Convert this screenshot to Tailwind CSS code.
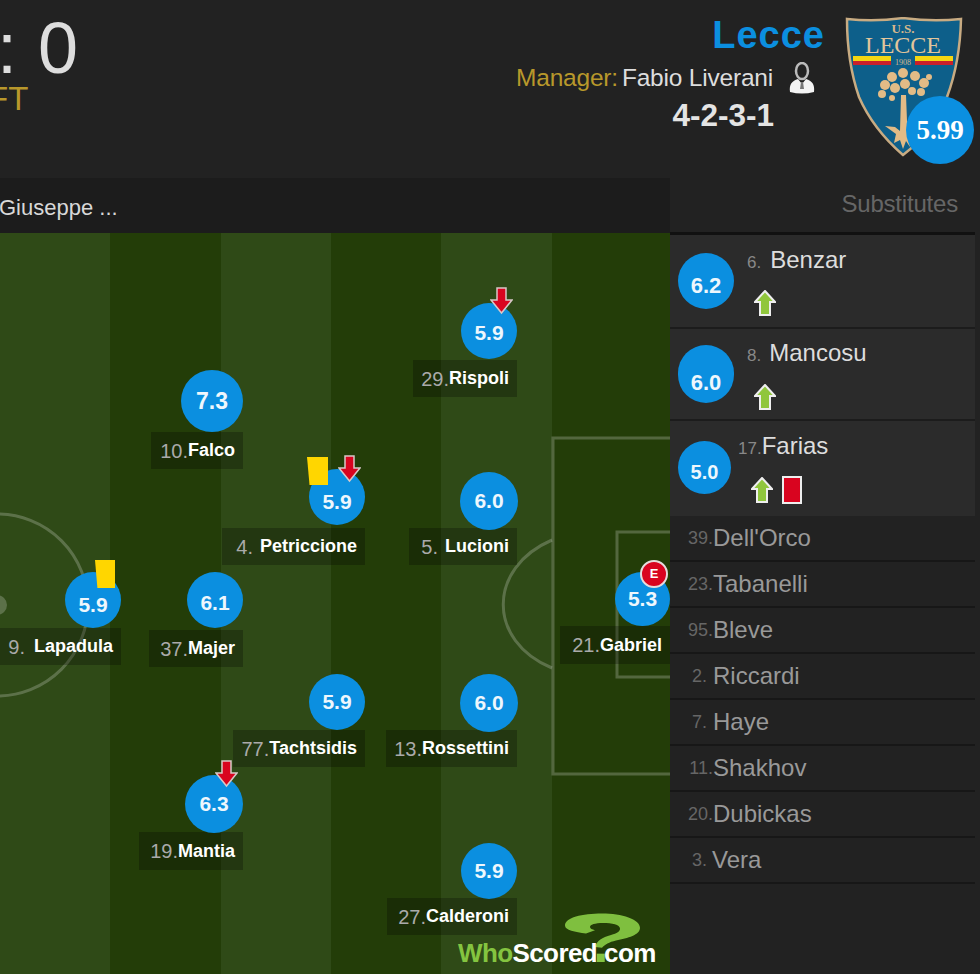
<!DOCTYPE html>
<html lang="en">
<head>
<meta charset="UTF-8">
<title>Lecce ratings</title>
<script src="https://cdn.jsdelivr.net/npm/@tailwindcss/browser@4"></script>
</head>
<body class="bg-[#222222] font-['Liberation_Sans',Arial,sans-serif] text-[#e0e0e0]">
<div class="w-[980px] h-[974px] overflow-hidden flex flex-col">

  <!-- match header -->
  <header class="h-[178px] shrink-0 flex justify-between bg-[#222222]">
    <div class="w-[100px] overflow-hidden">
      <div class="flex items-baseline h-[78px] text-[#dddddd] text-[72px] leading-[96px] ml-[-3px]">
        <span class="w-[41px]">:</span><span>0</span>
      </div>
      <div class="text-[#b8982b] text-[33px] leading-[40px] ml-[-12px] mt-[1px]">FT</div>
    </div>
    <div class="flex">
      <div class="flex flex-col items-end pt-[12px]">
        <div class="text-[#0b8fe0] text-[38px] leading-[46px] font-bold tracking-[1px] mr-[-55px]">Lecce</div>
        <div class="flex items-center mt-[4px] text-[24.500px] leading-[30px] tracking-[-0.2px]">
          <span class="text-[#b8982b]">Manager:</span>
          <span class="ml-[4px] text-[#dddddd]">Fabio Liverani</span>
          <svg class="ml-[16px] mr-[-45px]" width="26" height="32" viewBox="0 0 26 32">
            <ellipse cx="13" cy="9" rx="6" ry="8" fill="none" stroke="#bbbbbb" stroke-width="2.500"/>
            <path d="M1 30c-1-8 2-11 8-13l4 5 4-5c6 2 9 5 8 13-8 2-16 2-24 0z" fill="#f4f4f4"/>
            <path d="M12 20h2l1 7h-4z" fill="#777777"/>
          </svg>
        </div>
        <div class="text-[31.500px] leading-[42px] font-bold text-[#e4e4e4] mr-[-4px]">4-2-3-1</div>
      </div>
      <div class="relative w-[134px] ml-[71px] mr-[5px]">
        <svg class="absolute left-[4px] top-[17px]" width="118" height="140" viewBox="0 0 118 140">
          <path d="M2 2Q30 5 58 1Q87 5 116 2Q115 45 102 80Q88 115 58 138Q28 112 14 80Q2 45 2 2z" fill="#0d5f8a" stroke="#c8ab82" stroke-width="2.500"/>
          <text x="58" y="16" text-anchor="middle" font-family="Liberation Serif" font-size="13" font-weight="bold" fill="#d8b98c">U.S.</text>
          <text x="58" y="36" text-anchor="middle" font-family="Liberation Serif" font-size="24" fill="#e2c59b">LECCE</text>
          <rect x="8" y="39" width="38" height="5" fill="#f4d612"/>
          <rect x="8" y="44" width="38" height="4" fill="#c8202c"/>
          <rect x="70" y="39" width="38" height="5" fill="#f4d612"/>
          <rect x="70" y="44" width="38" height="4" fill="#c8202c"/>
          <text x="58" y="48" text-anchor="middle" font-family="Liberation Serif" font-size="8" fill="#d8b98c">1908</text>
          <g fill="#e2bb86">
            <circle cx="40" cy="68" r="5"/><circle cx="37" cy="77" r="4"/><circle cx="47" cy="60" r="5"/><circle cx="58" cy="56" r="5"/>
            <circle cx="70" cy="59" r="5"/><circle cx="79" cy="66" r="5"/><circle cx="84" cy="60" r="3"/><circle cx="76" cy="75" r="4"/>
            <circle cx="50" cy="71" r="5"/><circle cx="60" cy="67" r="5"/><circle cx="67" cy="74" r="4"/><circle cx="47" cy="81" r="3"/>
            <path d="M56 78h5l1 26 5 8-4 6 2 12-4-6-3 8-3-9-6 3 2-9-11-8 10 1 5 4z"/>
          </g>
        </svg>
        <div class="absolute left-[65px] top-[96px] w-[68px] h-[68px] rounded-full bg-[#0b8fe0] text-white font-bold font-['Liberation_Serif'] text-[27px] flex items-center justify-center">5.99</div>
      </div>
    </div>
  </header>

  <div class="flex flex-1 min-h-0">
    <!-- pitch column -->
    <main class="w-[670px] shrink-0 flex flex-col">
      <div class="h-[55px] shrink-0 bg-[#1c1c1c] text-[#d8d8d8] text-[22px] leading-[60px] ml-[-1px]">Giuseppe ...</div>
      <div class="relative flex-1 overflow-hidden">
        <div class="absolute inset-0 flex">
          <div class="w-[110px] bg-[#2f4a17]"></div>
          <div class="w-[111px] bg-[#233d08]"></div>
          <div class="w-[110px] bg-[#2f4a17]"></div>
          <div class="w-[110px] bg-[#233d08]"></div>
          <div class="w-[111px] bg-[#2f4a17]"></div>
          <div class="w-[118px] bg-[#233d08]"></div>
        </div>
        <svg class="absolute inset-0" width="670" height="741" viewBox="0 0 670 741" fill="none" stroke="#ffffff" stroke-opacity="0.22" stroke-width="3">
          <circle cx="-3" cy="372" r="91"/>
          <circle cx="-3" cy="372" r="10" fill="#ffffff" fill-opacity="0.22" stroke="none"/>
          <path d="M672 205H553V541H672"/>
          <path d="M672 299H617V444H672"/>
          <path d="M552 307C487 335 487 408 552 435"/>
        </svg>

        <!-- players -->
        <div class="absolute left-[413px] top-[127px] w-[104px] h-[37px] bg-black/25 flex items-center justify-end pr-[8px] text-[18px] font-bold text-white"><span class="font-normal text-[20px] text-[#aaaaaa]">29.</span>Rispoli</div>
        <div class="absolute left-[461px] top-[70px] w-[56px] h-[56px] rounded-full bg-[#0b8fe0] flex items-center justify-center text-[21px] font-bold text-[#eef7fd] pt-[3px]">5.9</div>
        <svg class="absolute left-[490px] top-[54px]" width="23" height="28" viewBox="0 0 23 28"><path d="M7 1h9v12h6L11.500 26 1 13h6z" fill="#d9041f" stroke="#d8c8c8" stroke-width="1.500"/></svg>

        <div class="absolute left-[151px] top-[199px] w-[92px] h-[37px] bg-black/25 flex items-center justify-end pr-[8px] text-[18px] font-bold text-white"><span class="font-normal text-[20px] text-[#aaaaaa]">10.</span>Falco</div>
        <div class="absolute left-[181px] top-[137px] w-[62px] h-[62px] rounded-full bg-[#0b8fe0] flex items-center justify-center text-[23px] font-bold text-[#eef7fd]">7.3</div>

        <div class="absolute left-[222px] top-[295px] w-[143px] h-[37px] bg-black/25 flex items-center justify-end pr-[8px] text-[18px] font-bold text-white"><span class="font-normal text-[20px] text-[#aaaaaa] mr-[7px]">4.</span>Petriccione</div>
        <div class="absolute left-[309px] top-[236px] w-[56px] h-[56px] rounded-full bg-[#0b8fe0] flex items-center justify-center text-[21px] font-bold text-[#eef7fd] pt-[10px]">5.9</div>
        <div class="absolute left-[307px] top-[224px] w-[21px] h-[28px] bg-[#ffd600] [clip-path:polygon(0_0,100%_0,100%_100%,12%_100%)]"></div>
        <svg class="absolute left-[338px] top-[222px]" width="23" height="28" viewBox="0 0 23 28"><path d="M7 1h9v12h6L11.500 26 1 13h6z" fill="#d9041f" stroke="#d8c8c8" stroke-width="1.500"/></svg>

        <div class="absolute left-[409px] top-[295px] w-[108px] h-[37px] bg-black/25 flex items-center justify-end pr-[8px] text-[18px] font-bold text-white"><span class="font-normal text-[20px] text-[#aaaaaa] mr-[7px]">5.</span>Lucioni</div>
        <div class="absolute left-[460px] top-[239px] w-[58px] h-[58px] rounded-full bg-[#0b8fe0] flex items-center justify-center text-[21px] font-bold text-[#eef7fd]">6.0</div>

        <div class="absolute left-0 top-[395px] w-[121px] h-[37px] bg-black/25 flex items-center justify-end pr-[8px] text-[18px] font-bold text-white"><span class="font-normal text-[20px] text-[#aaaaaa] mr-[9px]">9.</span>Lapadula</div>
        <div class="absolute left-[65px] top-[339px] w-[56px] h-[56px] rounded-full bg-[#0b8fe0] flex items-center justify-center text-[21px] font-bold text-[#eef7fd] pt-[9px]">5.9</div>
        <div class="absolute left-[95px] top-[327px] w-[20px] h-[28px] bg-[#ffd600] [clip-path:polygon(0_0,100%_0,100%_100%,12%_100%)]"></div>

        <div class="absolute left-[149px] top-[397px] w-[94px] h-[37px] bg-black/25 flex items-center justify-end pr-[8px] text-[18px] font-bold text-white"><span class="font-normal text-[20px] text-[#aaaaaa]">37.</span>Majer</div>
        <div class="absolute left-[187px] top-[339px] w-[56px] h-[56px] rounded-full bg-[#0b8fe0] flex items-center justify-center text-[21px] font-bold text-[#eef7fd] pt-[5px]">6.1</div>

        <div class="absolute left-[560px] top-[393px] w-[110px] h-[38px] bg-black/25 flex items-center justify-end pr-[8px] text-[18px] font-bold text-white"><span class="font-normal text-[20px] text-[#aaaaaa]">21.</span>Gabriel</div>
        <div class="absolute left-[615px] top-[339px] w-[55px] h-[54px] rounded-full bg-[#0b8fe0] flex items-center justify-center text-[21px] font-bold text-[#eef7fd]">5.3</div>
        <div class="absolute left-[640px] top-[327px] w-[28px] h-[28px] rounded-full bg-[#d9041f] border-2 border-[#e6dcdc] flex items-center justify-center text-[13px] font-bold text-white">E</div>

        <div class="absolute left-[233px] top-[497px] w-[132px] h-[37px] bg-black/25 flex items-center justify-end pr-[8px] text-[18px] font-bold text-white"><span class="font-normal text-[20px] text-[#aaaaaa]">77.</span>Tachtsidis</div>
        <div class="absolute left-[309px] top-[441px] w-[56px] h-[56px] rounded-full bg-[#0b8fe0] flex items-center justify-center text-[21px] font-bold text-[#eef7fd]">5.9</div>

        <div class="absolute left-[386px] top-[497px] w-[131px] h-[37px] bg-black/25 flex items-center justify-end pr-[8px] text-[18px] font-bold text-white"><span class="font-normal text-[20px] text-[#aaaaaa]">13.</span>Rossettini</div>
        <div class="absolute left-[460px] top-[441px] w-[58px] h-[58px] rounded-full bg-[#0b8fe0] flex items-center justify-center text-[21px] font-bold text-[#eef7fd]">6.0</div>

        <div class="absolute left-[139px] top-[599px] w-[104px] h-[38px] bg-black/25 flex items-center justify-end pr-[8px] text-[18px] font-bold text-white"><span class="font-normal text-[20px] text-[#aaaaaa]">19.</span>Mantia</div>
        <div class="absolute left-[185px] top-[542px] w-[58px] h-[58px] rounded-full bg-[#0b8fe0] flex items-center justify-center text-[21px] font-bold text-[#eef7fd]">6.3</div>
        <svg class="absolute left-[215px] top-[527px]" width="23" height="28" viewBox="0 0 23 28"><path d="M7 1h9v12h6L11.500 26 1 13h6z" fill="#d9041f" stroke="#d8c8c8" stroke-width="1.500"/></svg>

        <div class="absolute left-[387px] top-[665px] w-[130px] h-[37px] bg-black/25 flex items-center justify-end pr-[8px] text-[18px] font-bold text-white"><span class="font-normal text-[20px] text-[#aaaaaa]">27.</span>Calderoni</div>
        <div class="absolute left-[461px] top-[610px] w-[56px] h-[56px] rounded-full bg-[#0b8fe0] flex items-center justify-center text-[21px] font-bold text-[#eef7fd]">5.9</div>

        <!-- watermark -->
        <svg class="absolute left-[560px] top-[678px]" width="85" height="48" viewBox="0 0 85 60" preserveAspectRatio="none">
          <path fill-rule="evenodd" d="M5 18C5 8 22 3 42 3c20 0 38 7 38 18 0 9-12 13-24 16-7 2-11 5-14 9l-7-1c2-8 7-12 16-15 6-2 9-4 9-8 0-5-8-7-17-7-8 0-13 2-13 5 0 2 2 3 5 4l-9 4C15 26 5 24 5 18z" fill="#7fbf3f"/>
        </svg>
        <div class="absolute left-[458px] top-[704px] text-[26px] leading-[32px] font-bold tracking-[-0.6px] whitespace-nowrap text-white"><span class="text-[#84c440]">Who</span>Scored<span class="text-[#84c440] text-[56px] leading-[0] mx-[-4px]">.</span>com</div>
      </div>
    </main>

    <!-- substitutes -->
    <aside class="w-[305px] shrink-0">
      <div class="h-[57px] text-right pr-[17px] text-[#666666] text-[24px] leading-[52px] border-b-[3px] border-[#111111] tracking-[-0.2px]">Substitutes</div>

      <div class="h-[94px] bg-[#2b2b2b] border-b-2 border-[#1c1c1c] flex">
        <div class="w-[56px] h-[56px] rounded-full bg-[#0b8fe0] ml-[8px] mt-[18px] flex items-center justify-center pt-[9px] text-[22px] font-bold text-[#eef7fd]">6.2</div>
        <div class="ml-[13px]">
          <div class="h-[55px] flex items-baseline pt-[7px] text-[24px] text-[#dddddd]"><span class="text-[17px] text-[#888888] mr-[9px]">6.</span>Benzar</div>
          <svg class="ml-[7px]" width="22" height="26" viewBox="0 0 22 26"><path d="M11 1 21 12h-5v13H6V12H1z" fill="#90c63c" stroke="#eeeeee" stroke-width="2"/></svg>
        </div>
      </div>
      <div class="h-[92px] bg-[#2b2b2b] border-b-2 border-[#1c1c1c] flex">
        <div class="w-[56px] h-[58px] rounded-full bg-[#0b8fe0] ml-[8px] mt-[16px] flex items-center justify-center pt-[16px] text-[22px] font-bold text-[#eef7fd]">6.0</div>
        <div class="ml-[13px]">
          <div class="h-[55px] flex items-baseline pt-[6px] text-[24px] text-[#dddddd]"><span class="text-[17px] text-[#888888] mr-[8px]">8.</span>Mancosu</div>
          <svg class="ml-[7px]" width="22" height="26" viewBox="0 0 22 26"><path d="M11 1 21 12h-5v13H6V12H1z" fill="#90c63c" stroke="#eeeeee" stroke-width="2"/></svg>
        </div>
      </div>
      <div class="h-[95px] bg-[#2b2b2b] flex">
        <div class="w-[53px] h-[53px] rounded-full bg-[#0b8fe0] ml-[8px] mt-[20px] flex items-center justify-center pt-[8px] text-[20px] font-bold text-[#eef7fd]">5.0</div>
        <div class="ml-[7px]">
          <div class="h-[55px] flex items-baseline pt-[7px] text-[24px] text-[#dddddd]"><span class="text-[17px] text-[#888888]">17.</span>Farias</div>
          <div class="flex items-center ml-[13px] gap-[9px]">
            <svg width="22" height="26" viewBox="0 0 22 26"><path d="M11 1 21 12h-5v13H6V12H1z" fill="#90c63c" stroke="#eeeeee" stroke-width="2"/></svg>
            <div class="w-[20px] h-[28px] bg-[#d9041f] border-2 border-[#eeeeee]"></div>
          </div>
        </div>
      </div>

      <div class="h-[46px] border-b-2 border-[#171717] flex items-center text-[24px] text-[#999999]"><span class="w-[43px] text-right text-[18px] text-[#666666]">39.</span>Dell'Orco</div>
      <div class="h-[46px] border-b-2 border-[#171717] flex items-center text-[24px] text-[#999999]"><span class="w-[43px] text-right text-[18px] text-[#666666]">23.</span>Tabanelli</div>
      <div class="h-[46px] border-b-2 border-[#171717] flex items-center text-[24px] text-[#999999]"><span class="w-[43px] text-right text-[18px] text-[#666666]">95.</span>Bleve</div>
      <div class="h-[46px] border-b-2 border-[#171717] flex items-center text-[24px] text-[#999999]"><span class="w-[37px] text-right text-[18px] text-[#666666] mr-[6px]">2.</span>Riccardi</div>
      <div class="h-[46px] border-b-2 border-[#171717] flex items-center text-[24px] text-[#999999]"><span class="w-[37px] text-right text-[18px] text-[#666666] mr-[6px]">7.</span>Haye</div>
      <div class="h-[46px] border-b-2 border-[#171717] flex items-center text-[24px] text-[#999999]"><span class="w-[43px] text-right text-[18px] text-[#666666]">11.</span>Shakhov</div>
      <div class="h-[46px] border-b-2 border-[#171717] flex items-center text-[24px] text-[#999999]"><span class="w-[43px] text-right text-[18px] text-[#666666]">20.</span>Dubickas</div>
      <div class="h-[46px] border-b-2 border-[#171717] flex items-center text-[24px] text-[#999999]"><span class="w-[37px] text-right text-[18px] text-[#666666] mr-[5px]">3.</span>Vera</div>
    </aside>
  </div>
</div>
</body>
</html>
